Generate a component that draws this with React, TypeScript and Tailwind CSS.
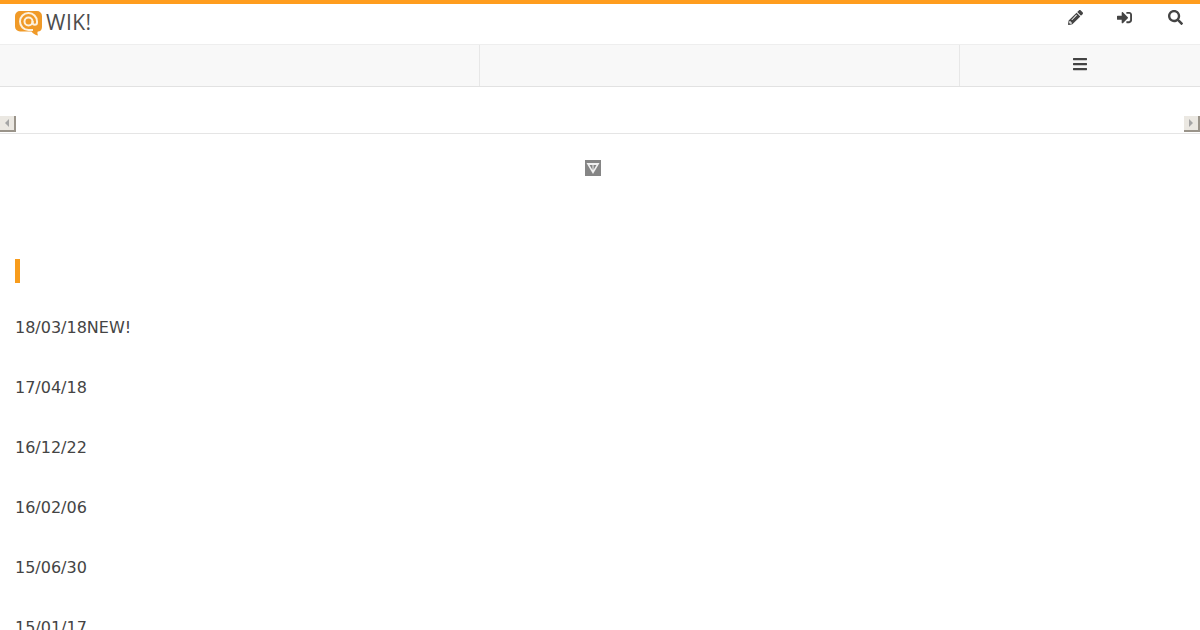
import { FaBars, FaPencilAlt, FaSearch, FaSignInAlt } from 'react-icons/fa';

const dates = ['18/03/18NEW!', '17/04/18', '16/12/22', '16/02/06', '15/06/30', '15/01/17'];

function Logo() {
  return (
    <div className="flex items-start">
      <svg width="28" height="25" viewBox="0 0 28 25" className="block">
        <path d="M5 0h17a5 5 0 0 1 5 5v11c0 3-2 4.500-4 4.500-.5 0-1 1.500 0 4-3-.5-5-2-6.500-4H5a5 5 0 0 1-5-5V5a5 5 0 0 1 5-5z" fill="#f09a28" />
        <path d="M18 19H13.500a8.500 8.500 0 1 1 8.500-8.500v1a2.200 2.200 0 0 1-4.400 0V10" fill="none" stroke="#fdf1de" strokeWidth="2" />
        <circle cx="13.500" cy="10.500" r="4" fill="none" stroke="#fdf1de" strokeWidth="2" />
      </svg>
      <span className="ml-[3px] font-['Open_Sans',sans-serif] text-[21px] leading-[22px] font-medium tracking-[0.5px] text-[#4d4d4d]">WIK!</span>
    </div>
  );
}

function ScrollButton({ dir }: { dir: 'left' | 'right' }) {
  return (
    <div className="flex h-4 w-4 items-center justify-center border-r-2 border-b-2 border-r-[#9a948a] border-b-[#9a948a] bg-[#ebe8e2]">
      <div
        className={
          dir === 'left'
            ? 'h-0 w-0 border-y-[4px] border-r-[4px] border-y-transparent border-r-[#a5a5a5]'
            : 'h-0 w-0 border-y-[4px] border-l-[4px] border-y-transparent border-l-[#a5a5a5]'
        }
      />
    </div>
  );
}

export default function App() {
  return (
    <div className="h-[630px] overflow-hidden bg-white font-['DejaVu_Sans',sans-serif] text-[#444]">
      <header className="flex h-[45px] items-start justify-between border-t-4 border-b border-t-[#ff9d1e] border-b-[#eeeeee] pl-[15px]">
        <div className="pt-[7px]">
          <Logo />
        </div>
        <div className="flex pt-[6px] pr-[17px] text-[15px] text-[#444]">
          <FaPencilAlt className="mr-[34px]" />
          <FaSignInAlt className="mr-[36px]" />
          <FaSearch />
        </div>
      </header>

      <nav className="flex h-[42px] border-b border-[#e2e2e2] bg-[#f8f8f8]">
        <div className="w-[480px] border-r border-[#e7e7e7]" />
        <div className="w-[480px] border-r border-[#e7e7e7]" />
        <div className="flex w-[240px] items-center justify-center pb-[4px] text-[16px] text-[#444]">
          <FaBars />
        </div>
      </nav>

      <div className="flex h-[47px] items-end justify-between border-b border-[#e5e5e5] pb-[1px]">
        <ScrollButton dir="left" />
        <ScrollButton dir="right" />
      </div>

      <div className="flex justify-center pt-[26px] pr-[15px]">
        <svg width="16" height="16" viewBox="0 0 16 16" className="block">
          <rect width="16" height="16" fill="#858585" />
          <path d="M1.500 3h13L8 14z" fill="#f0f0f0" />
          <path d="M4.500 5h3v5zM8.500 5h3L8.500 10z" fill="#858585" />
        </svg>
      </div>

      <main className="px-[15px] pt-[83px]">
        <div className="h-6 w-[5px] bg-[#f89c1c]" />
        <ul className="mt-[33px] flex flex-col gap-9 text-[16px] leading-6">
          {dates.map((d) => (
            <li key={d}>{d}</li>
          ))}
        </ul>
      </main>
    </div>
  );
}
